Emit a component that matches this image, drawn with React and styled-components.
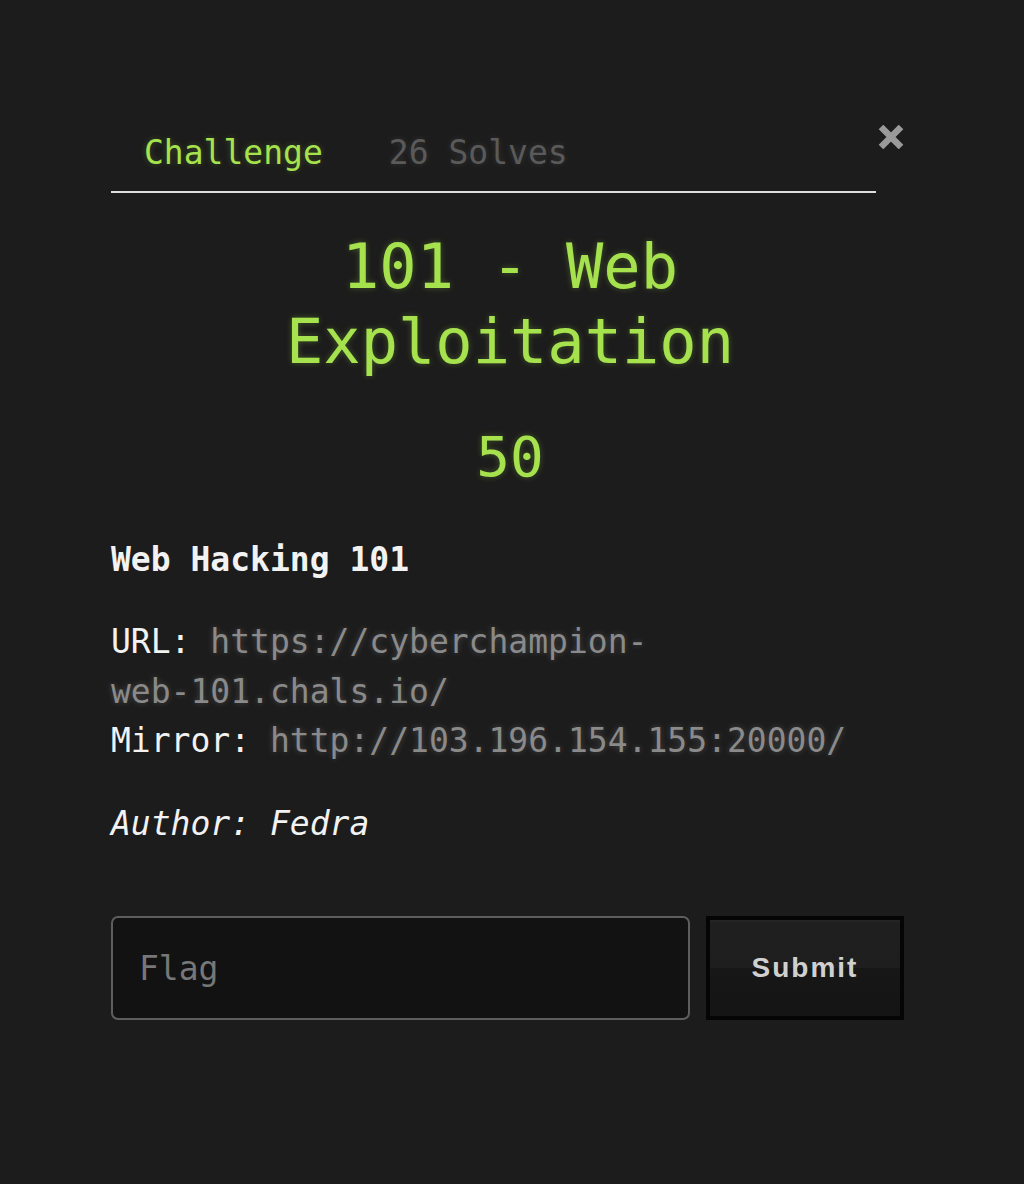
import styled, {createGlobalStyle} from 'styled-components';

const GlobalStyle = createGlobalStyle`
  html, body {
    margin: 0;
    padding: 0;
    background: #1c1c1c;
  }
  body {
    font-family: "DejaVu Sans Mono", "Liberation Mono", monospace;
    color: #f2f2f2;
  }
`;

const Page = styled.div`
  min-height: 1184px;
  padding-top: 112px;
  box-sizing: border-box;
`;

const Dialog = styled.div`
  width: 793px;
  margin-left: 111px;
`;

const Header = styled.div`
  display: flex;
  align-items: flex-start;
`;

const Nav = styled.nav`
  flex: 1;
  display: flex;
  border-bottom: 2px solid #dedede;
`;

const Tab = styled.a`
  padding: 16px 33px 13px;
  font-size: 33px;
  line-height: 1.5;
  color: ${(p) => (p.$active ? '#a6e24d' : '#5a5a5a')};
  text-shadow: ${(p) =>
    p.$active ? '0 0 6px rgba(166, 226, 77, 0.25)' : '0 0 6px rgba(255, 255, 255, 0.12)'};
  cursor: pointer;
`;

const Close = styled.button`
  width: 28px;
  margin-top: 13px;
  padding: 0;
  border: 0;
  background: none;
  cursor: pointer;
  display: flex;
  justify-content: flex-end;
`;

const Title = styled.h1`
  margin: 36px 0 0;
  padding-left: 5px;
  font-size: 62px;
  line-height: 1.22;
  font-weight: normal;
  text-align: center;
  color: #a6e24d;
  text-shadow: 0 0 6px rgba(166, 226, 77, 0.3);
`;

const Value = styled.h3`
  margin: 43px 0 0;
  padding-left: 5px;
  font-size: 56px;
  line-height: 1.2;
  font-weight: normal;
  text-align: center;
  color: #a6e24d;
  text-shadow: 0 0 6px rgba(166, 226, 77, 0.3);
`;

const Description = styled.div`
  margin-top: 45px;
  font-size: 33px;
  line-height: 1.5;
`;

const Para = styled.p`
  margin: 0 0 ${(p) => p.$gap ?? 33}px;
  font-style: ${(p) => (p.$italic ? 'italic' : 'normal')};
`;

const Link = styled.a`
  color: #8a8a8a;
  text-decoration: none;
  text-shadow: 0 0 6px rgba(255, 255, 255, 0.2);
`;

const NoWrap = styled.span`
  white-space: nowrap;
`;

const Form = styled.form`
  display: flex;
  gap: 16px;
  margin-top: 68px;
`;

const FlagInput = styled.input`
  flex: 1;
  height: 104px;
  box-sizing: border-box;
  padding: 0 26px;
  border: 2px solid #5e5e5e;
  border-radius: 7px;
  background: #121212;
  color: #eee;
  font-family: "DejaVu Sans Mono", monospace;
  font-size: 33px;
  outline: none;

  &::placeholder {
    color: #777;
  }
`;

const SubmitButton = styled.button`
  width: 198px;
  height: 104px;
  box-sizing: border-box;
  border: 4px solid #050505;
  background: linear-gradient(#262626 0, #1f1f1f 3px, #1e1e1e 50%, #171717 50%, #141414 100%);
  color: #d0d0d0;
  font-family: "Liberation Sans", Arial, sans-serif;
  font-weight: bold;
  font-size: 28px;
  letter-spacing: 2px;
  cursor: pointer;
`;

export default function App() {
  return (
    <Page>
      <GlobalStyle />
      <Dialog>
        <Header>
          <Nav>
            <Tab $active>Challenge</Tab>
            <Tab>26 Solves</Tab>
          </Nav>
          <Close aria-label="Close">
            <svg width="26" height="24" viewBox="0 0 26 24">
              <path d="M3 2 L23 22 M23 2 L3 22" stroke="#9a9a9a" strokeWidth="6.5" />
            </svg>
          </Close>
        </Header>
        <Title>101 - Web Exploitation</Title>
        <Value>50</Value>
        <Description>
          <Para>
            <strong>Web Hacking 101</strong>
          </Para>
          <Para>
            URL: <Link>https://cyberchampion-<NoWrap>web-101.chals.io/</NoWrap></Link>
            <br />
            Mirror: <Link>http://103.196.154.155:20000/</Link>
          </Para>
          <Para $italic $gap={0}>
            Author: Fedra
          </Para>
        </Description>
        <Form onSubmit={(e) => e.preventDefault()}>
          <FlagInput placeholder="Flag" />
          <SubmitButton type="submit">Submit</SubmitButton>
        </Form>
      </Dialog>
    </Page>
  );
}
